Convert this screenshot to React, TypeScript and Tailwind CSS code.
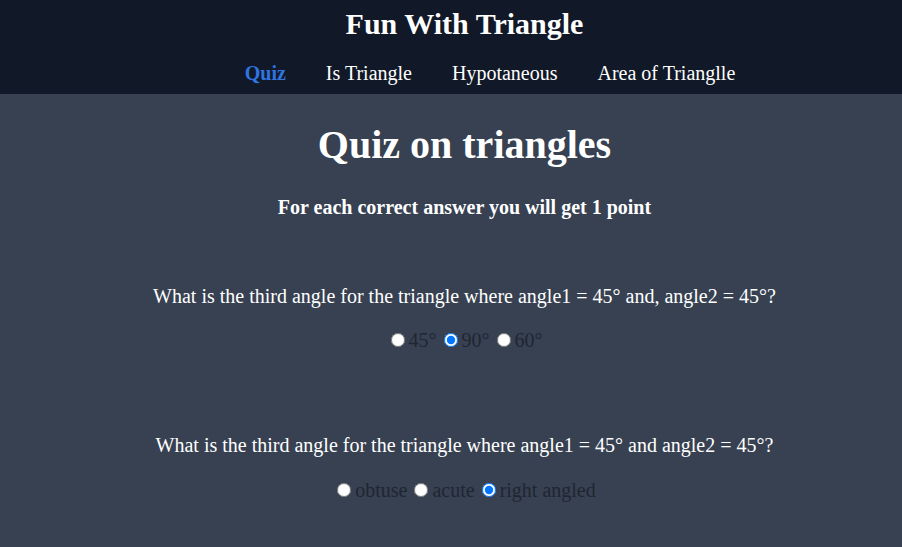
export default function App() {
  const serif = { fontFamily: '"Liberation Serif", "Times New Roman", serif' };
  const radio = "m-0 w-[14px] h-[14px] shrink-0";
  return (
    <div className="min-h-[547px] bg-[#374151] text-white" style={serif}>
      <header className="bg-[#111827] h-[94px] flex flex-col items-center pl-[27px]">
        <h1 className="text-[30px] font-bold leading-none mt-[9px]">Fun With Triangle</h1>
        <nav className="flex gap-10 text-[20px] mt-[24px] pl-[51px] leading-none">
          <a className="font-bold text-[#2f74e0]">Quiz</a>
          <a>Is Triangle</a>
          <a>Hypotaneous</a>
          <a>Area of Trianglle</a>
        </nav>
      </header>
      <main className="flex flex-col items-center pl-[27px]">
        <h2 className="text-[40px] font-bold leading-none mt-[31px]">Quiz on triangles</h2>
        <p className="text-[20px] font-bold mt-[32px] leading-none">For each correct answer you will get 1 point</p>
        <p className="text-[20px] mt-[69px] leading-none">What is the third angle for the triangle where angle1 = 45° and, angle2 = 45°?</p>
        <div className="flex items-center text-[20px] text-[#1f2633] mt-[24px] pl-[4px] leading-none">
          <input type="radio" name="q1" className={radio} />
          <span className="ml-[4px]">45°</span>
          <input type="radio" name="q1" defaultChecked className={radio + " ml-[7px]"} />
          <span className="ml-[4px]">90°</span>
          <input type="radio" name="q1" className={radio + " ml-[7px]"} />
          <span className="ml-[4px]">60°</span>
        </div>
        <p className="text-[20px] mt-[85px] leading-none">What is the third angle for the triangle where angle1 = 45° and angle2 = 45°?</p>
        <div className="flex items-center text-[20px] text-[#1f2633] mt-[25px] pl-[4px] leading-none">
          <input type="radio" name="q2" className={radio} />
          <span className="ml-[4px]">obtuse</span>
          <input type="radio" name="q2" className={radio + " ml-[7px]"} />
          <span className="ml-[4px]">acute</span>
          <input type="radio" name="q2" defaultChecked className={radio + " ml-[7px]"} />
          <span className="ml-[4px]">right angled</span>
        </div>
      </main>
    </div>
  );
}
